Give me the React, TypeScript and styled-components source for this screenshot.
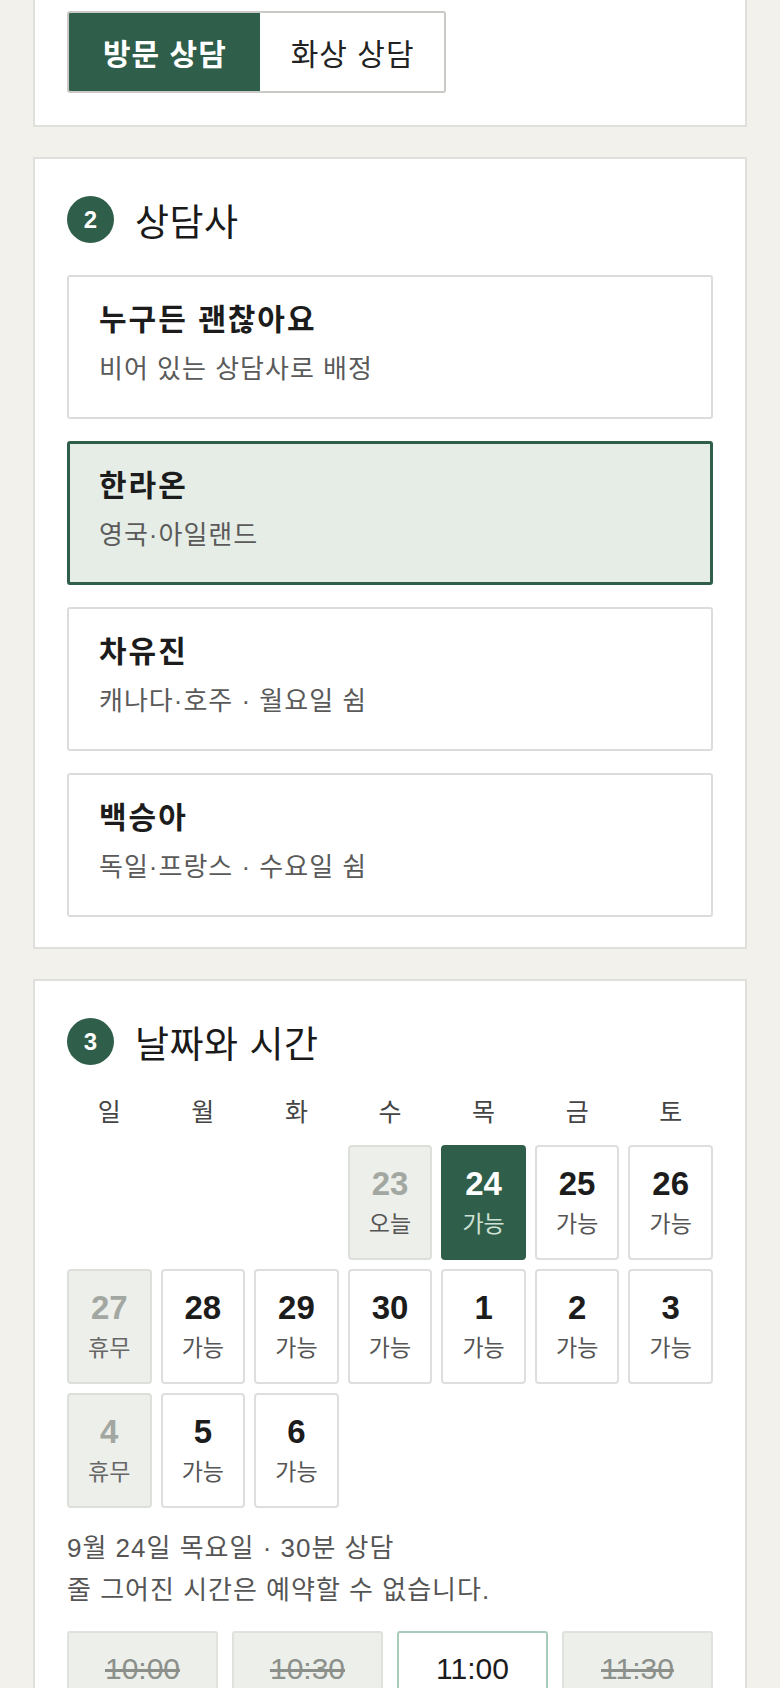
import React from "react";
import styled, { createGlobalStyle } from "styled-components";

const GlobalStyle = createGlobalStyle`
  * { box-sizing: border-box; }
  body {
    margin: 0;
    background: #f2f1ec;
    font-family: "Liberation Sans", "Noto Sans CJK KR", sans-serif;
    color: #1c1c1c;
  }
`;

const GREEN = "#2f5e4a";

const Page = styled.div`
  display: flex;
  flex-direction: column;
  gap: 30px;
  padding: 0 33px 40px;
`;

const Section = styled.section<{ $clipped?: boolean }>`
  background: #fff;
  border: 2px solid #dfdfdb;
  border-top: ${(p) => (p.$clipped ? "none" : "2px solid #dfdfdb")};
  padding: ${(p) => (p.$clipped ? "11px 32px 32px" : "37px 32px 30px")};
`;

/* ---------- toggle ---------- */

const Toggle = styled.div`
  display: inline-flex;
  height: 82px;
  border: 2px solid #c9cac6;
  border-radius: 3px;
  overflow: hidden;
`;

const ToggleButton = styled.div<{ $active?: boolean }>`
  display: flex;
  align-items: center;
  padding: ${(p) => (p.$active ? "0 33px 0 34px" : "0 29px 0 31px")};
  font-size: 30px;
  letter-spacing: 1px;
  font-weight: ${(p) => (p.$active ? 700 : 400)};
  color: ${(p) => (p.$active ? "#fff" : "#222")};
  background: ${(p) => (p.$active ? GREEN : "#fff")};
`;

/* ---------- section header ---------- */

const Header = styled.div`
  display: flex;
  align-items: center;
  gap: 21px;
  height: 47px;
`;

const StepBadge = styled.div`
  width: 47px;
  height: 47px;
  border-radius: 50%;
  background: ${GREEN};
  color: #fff;
  font-weight: 700;
  font-size: 24px;
  display: flex;
  align-items: center;
  justify-content: center;
`;

const Title = styled.h2`
  margin: 0;
  font-size: 37px;
  font-weight: 400;
  color: #1a1a1a;
  letter-spacing: 0.5px;
`;

/* ---------- counselors ---------- */

const OptionList = styled.div`
  display: flex;
  flex-direction: column;
  gap: 22px;
  margin-top: 32px;
`;

const OptionCard = styled.div<{ $selected?: boolean }>`
  display: flex;
  flex-direction: column;
  gap: 15px;
  border: ${(p) => (p.$selected ? `3px solid ${GREEN}` : "2px solid #dcdcdc")};
  border-radius: 3px;
  background: ${(p) => (p.$selected ? "#e5ede6" : "#fff")};
  padding: ${(p) => (p.$selected ? "24px 29px 30px" : "25px 30px 31px")};
`;

const OptionName = styled.div`
  font-size: 30px;
  font-weight: 700;
  letter-spacing: 2px;
  line-height: 36px;
  color: #1c1c1c;
`;

const OptionDesc = styled.div`
  font-size: 26px;
  letter-spacing: 1px;
  line-height: 33px;
  color: #5a5a5a;
`;

/* ---------- calendar ---------- */

const Weekdays = styled.div`
  display: grid;
  grid-template-columns: repeat(7, 1fr);
  column-gap: 9px;
  margin-top: 31px;
`;

const Weekday = styled.div`
  text-align: center;
  font-size: 25px;
  line-height: 1.3;
  color: #444;
`;

const DayGrid = styled.div`
  display: grid;
  grid-template-columns: repeat(7, 1fr);
  grid-auto-rows: 115px;
  gap: 9px;
  margin-top: 16px;
`;

type DayKind = "open" | "off" | "today" | "picked";

const DayCell = styled.div<{ $kind: DayKind }>`
  display: flex;
  flex-direction: column;
  align-items: center;
  justify-content: center;
  gap: 8px;
  border-radius: 4px;
  border: 2px solid
    ${(p) =>
      p.$kind === "picked" ? GREEN : p.$kind === "open" ? "#dedede" : "#dcdfda"};
  background: ${(p) =>
    p.$kind === "picked" ? GREEN : p.$kind === "open" ? "#fff" : "#edefeb"};
`;

const DayNumber = styled.div<{ $kind: DayKind }>`
  font-size: 33px;
  font-weight: 700;
  line-height: 1.15;
  color: ${(p) =>
    p.$kind === "picked" ? "#fff" : p.$kind === "open" ? "#1c1c1c" : "#a3a7a1"};
`;

const DayLabel = styled.div<{ $kind: DayKind }>`
  font-size: 23px;
  line-height: 29px;
  color: ${(p) =>
    p.$kind === "picked" ? "#cfe2d5" : p.$kind === "off" ? "#666" : "#555"};
`;

const Info = styled.div`
  margin-top: 19px;
  font-size: 26px;
  letter-spacing: 1px;
  line-height: 42px;
  color: #555;
`;

const SlotGrid = styled.div`
  display: grid;
  grid-template-columns: repeat(4, 1fr);
  gap: 14px;
  margin-top: 20px;
`;

const Slot = styled.div<{ $blocked?: boolean }>`
  border-radius: 3px;
  border: 2px solid ${(p) => (p.$blocked ? "#dfe2dd" : "#a9cbbb")};
  background: ${(p) => (p.$blocked ? "#edefeb" : "#fff")};
  padding: 16px 0;
  text-align: center;
  font-size: 30px;
  line-height: 39px;
  color: ${(p) => (p.$blocked ? "#8c908a" : "#1c1c1c")};
  text-decoration: ${(p) => (p.$blocked ? "line-through" : "none")};
`;

const counselors = [
  { name: "누구든 괜찮아요", desc: "비어 있는 상담사로 배정" },
  { name: "한라온", desc: "영국·아일랜드", selected: true },
  { name: "차유진", desc: "캐나다·호주 · 월요일 쉼" },
  { name: "백승아", desc: "독일·프랑스 · 수요일 쉼" },
];

const weekdays = ["일", "월", "화", "수", "목", "금", "토"];

type Day = { n: number; kind: DayKind; label: string } | null;

const days: Day[] = [
  null,
  null,
  null,
  { n: 23, kind: "today", label: "오늘" },
  { n: 24, kind: "picked", label: "가능" },
  { n: 25, kind: "open", label: "가능" },
  { n: 26, kind: "open", label: "가능" },
  { n: 27, kind: "off", label: "휴무" },
  { n: 28, kind: "open", label: "가능" },
  { n: 29, kind: "open", label: "가능" },
  { n: 30, kind: "open", label: "가능" },
  { n: 1, kind: "open", label: "가능" },
  { n: 2, kind: "open", label: "가능" },
  { n: 3, kind: "open", label: "가능" },
  { n: 4, kind: "off", label: "휴무" },
  { n: 5, kind: "open", label: "가능" },
  { n: 6, kind: "open", label: "가능" },
];

const slots = [
  { t: "10:00", blocked: true },
  { t: "10:30", blocked: true },
  { t: "11:00", blocked: false },
  { t: "11:30", blocked: true },
];

const App = () => {
  return (
    <>
      <GlobalStyle />
      <Page>
        <Section $clipped>
          <Toggle>
            <ToggleButton $active>방문 상담</ToggleButton>
            <ToggleButton>화상 상담</ToggleButton>
          </Toggle>
        </Section>

        <Section>
          <Header>
            <StepBadge>2</StepBadge>
            <Title>상담사</Title>
          </Header>
          <OptionList>
            {counselors.map((c) => (
              <OptionCard key={c.name} $selected={c.selected}>
                <OptionName>{c.name}</OptionName>
                <OptionDesc>{c.desc}</OptionDesc>
              </OptionCard>
            ))}
          </OptionList>
        </Section>

        <Section>
          <Header>
            <StepBadge>3</StepBadge>
            <Title>날짜와 시간</Title>
          </Header>
          <Weekdays>
            {weekdays.map((w) => (
              <Weekday key={w}>{w}</Weekday>
            ))}
          </Weekdays>
          <DayGrid>
            {days.map((d, i) =>
              d ? (
                <DayCell key={i} $kind={d.kind}>
                  <DayNumber $kind={d.kind}>{d.n}</DayNumber>
                  <DayLabel $kind={d.kind}>{d.label}</DayLabel>
                </DayCell>
              ) : (
                <div key={i} />
              )
            )}
          </DayGrid>
          <Info>
            <div>9월 24일 목요일 · 30분 상담</div>
            <div>줄 그어진 시간은 예약할 수 없습니다.</div>
          </Info>
          <SlotGrid>
            {slots.map((s) => (
              <Slot key={s.t} $blocked={s.blocked}>
                {s.t}
              </Slot>
            ))}
          </SlotGrid>
        </Section>
      </Page>
    </>
  );
};

export default App;
